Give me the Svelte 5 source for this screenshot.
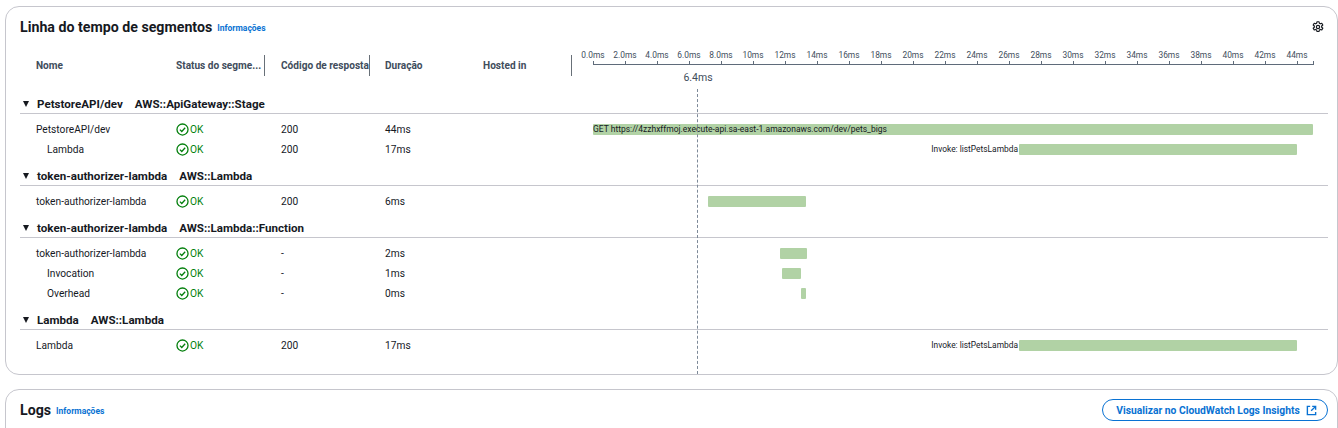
<script>
  const ticks = Array.from({ length: 23 }, (_, i) => i * 2);
  const tickLabel = (t) => (t < 10 ? t.toFixed(1) : String(t)) + 'ms';
  const pos = (x) => x - 593;
  const groups = [
    { name: 'PetstoreAPI/dev', type: 'AWS::ApiGateway::Stage', rows: [
      { name: 'PetstoreAPI/dev', code: '200', dur: '44ms', from: 593, to: 1313, inner: 'GET https://4zzhxffmoj.execute-api.sa-east-1.amazonaws.com/dev/pets_bigs' },
      { name: 'Lambda', sub: true, code: '200', dur: '17ms', from: 1019, to: 1297, outer: 'Invoke: listPetsLambda' }
    ]},
    { name: 'token-authorizer-lambda', type: 'AWS::Lambda', rows: [
      { name: 'token-authorizer-lambda', code: '200', dur: '6ms', from: 708, to: 806 }
    ]},
    { name: 'token-authorizer-lambda', type: 'AWS::Lambda::Function', rows: [
      { name: 'token-authorizer-lambda', code: '-', dur: '2ms', from: 780, to: 807 },
      { name: 'Invocation', sub: true, code: '-', dur: '1ms', from: 782, to: 801 },
      { name: 'Overhead', sub: true, code: '-', dur: '0ms', from: 801, to: 806 }
    ]},
    { name: 'Lambda', type: 'AWS::Lambda', rows: [
      { name: 'Lambda', code: '200', dur: '17ms', from: 1019, to: 1297, outer: 'Invoke: listPetsLambda' }
    ]}
  ];
</script>

<div class="page">
  <section class="card timeline">
    <header class="head">
      <h2>Linha do tempo de segmentos</h2>
      <a class="info" href="#info">Informações</a>
      <svg class="gear" viewBox="0 0 16 16" width="12" height="12" aria-hidden="true">
        <path d="M6.6 1h2.8l.4 2 1.3.7 1.9-.7 1.4 2.4-1.5 1.3v1.6l1.5 1.3-1.4 2.4-1.9-.7-1.3.7-.4 2H6.6l-.4-2-1.3-.7-1.9.7L1.6 9.6l1.5-1.3V6.7L1.6 5.4 3 3l1.9.7 1.3-.7z" fill="none" stroke="#16191f" stroke-width="1.6" stroke-linejoin="round"/>
        <circle cx="8" cy="8" r="2.2" fill="none" stroke="#16191f" stroke-width="1.6"/>
      </svg>
    </header>

    <div class="columns">
      <div class="th name">Nome</div>
      <div class="th status sep">Status do segme...</div>
      <div class="th code sep">Código de resposta</div>
      <div class="th dur">Duração</div>
      <div class="th hosted sep">Hosted in</div>
      <div class="ruler">
        <div class="axis"></div>
        {#each ticks as t}
          <div class="tick" style="left:{t * 16}px"><span>{tickLabel(t)}</span></div>
        {/each}
        <div class="tick last"></div>
      </div>
    </div>

    <div class="marker">6.4ms</div>

    {#each groups as g}
      <div class="group">
        <span class="caret"></span>
        <span class="gname">{g.name}</span>
        <span class="gtype">{g.type}</span>
      </div>
      <div class="rows">
        {#each g.rows as r}
          <div class="row">
            <div class="cell cname" class:sub={r.sub}>{r.name}</div>
            <div class="cell ok">
              <svg viewBox="0 0 16 16" width="13" height="13" aria-hidden="true">
                <circle cx="8" cy="8" r="6.8" fill="none" stroke="#037f0c" stroke-width="1.6"/>
                <path d="M4.8 8.2l2.3 2.3 4.2-4.6" fill="none" stroke="#037f0c" stroke-width="1.6"/>
              </svg>
              <span>OK</span>
            </div>
            <div class="cell">{r.code}</div>
            <div class="cell">{r.dur}</div>
            <div class="cell"></div>
            <div class="track">
              <div class="bar" style="left:{pos(r.from)}px;width:{r.to - r.from}px">
                {#if r.inner}<span class="inner">{r.inner}</span>{/if}
                {#if r.outer}<span class="outer">{r.outer}</span>{/if}
              </div>
            </div>
          </div>
        {/each}
      </div>
    {/each}

    <div class="dash"></div>
  </section>

  <section class="card logs">
    <header class="head">
      <h2>Logs</h2>
      <a class="info" href="#info">Informações</a>
      <button type="button">
        Visualizar no CloudWatch Logs Insights
        <svg viewBox="0 0 16 16" width="11" height="11" aria-hidden="true">
          <path d="M6 2H2v12h12v-4M9 2h5v5M14 2L7.5 8.5" fill="none" stroke="#0972d3" stroke-width="2"/>
        </svg>
      </button>
    </header>
    <p>Todos os logs do trace atual</p>
  </section>
</div>

<style>
  :global(body) { margin: 0; background: #fff; overflow: hidden; }
  .page {
    height: 428px;
    overflow: hidden;
    padding: 6px 0 0 5px;
    box-sizing: border-box;
    font-family: Roboto, "Liberation Sans", sans-serif;
    font-size: 10.2px;
    color: #16191f;
  }
  .card {
    position: relative;
    border: 1px solid #c6c6cd;
    border-radius: 14px;
    width: 1333px;
    box-sizing: border-box;
    padding: 0 9px 0 14px;
    background: #fff;
  }
  .timeline { height: 369px; }
  .logs { margin-top: 14px; height: 60px; }
  .head { display: flex; align-items: center; height: 40px; gap: 5px; }
  .head h2 { margin: 0; font-size: 14.2px; font-weight: 700; line-height: 20px; }
  .info { color: #0972d3; font-size: 8.5px; font-weight: 700; text-decoration: none; margin-top: 2px; }
  .gear { margin-left: auto; margin-right: 4px; }
  .columns { display: flex; height: 24px; margin-top: 8px; margin-bottom: 16px; font-weight: 700; color: #414d5c; font-size: 10.1px; }
  .th { display: flex; align-items: center; box-sizing: border-box; white-space: nowrap; height: 21px; }
  .th.sep { border-right: 1px solid #687078; }
  .name { width: 156px; padding-left: 16px; }
  .status { width: 89px; margin-right: 16px; }
  .code { width: 89px; margin-right: 15px; }
  .dur { width: 98px; }
  .hosted { width: 89px; }
  .ruler { position: relative; margin-left: 21px; margin-top: -1px; width: 720px; height: 24px; font-weight: 400; }
  .axis { position: absolute; left: 0; right: 0; top: 10px; height: 1px; background: #5f6b7a; }
  .tick { position: absolute; top: 7px; width: 1px; height: 4px; background: #5f6b7a; }
  .tick.last { left: 720px; }
  .tick span { position: absolute; bottom: 5px; left: 0; transform: translateX(-50%); font-size: 8.4px; line-height: 10px; white-space: nowrap; color: #414d5c; }
  .marker { position: absolute; left: 672px; top: 64px; width: 40px; text-align: center; font-size: 10.5px; line-height: 14px; color: #414d5c; }
  .dash { position: absolute; left: 691px; top: 82px; bottom: 0; border-left: 1px dashed #7d8998; }
  .group {
    display: flex; align-items: center;
    margin-top: 8px;
    height: 18px;
    padding-left: 3px;
    font-weight: 700; font-size: 11.6px;
    border-bottom: 1px solid #c6c6cd;
    box-sizing: content-box;
  }
  .caret { width: 0; height: 0; border-left: 3.5px solid transparent; border-right: 3.5px solid transparent; border-top: 6px solid #16191f; margin-right: 8px; }
  .gtype { margin-left: 12px; }
  .rows { padding-top: 5px; }
  .row { display: flex; height: 20px; align-items: center; }
  .cell { width: 104px; white-space: nowrap; }
  .row .cell:nth-child(3) { width: 104px; }
  .row .cell:nth-child(4) { width: 98px; }
  .row .cell:nth-child(5) { width: 90px; }
  .cname { width: 156px; box-sizing: border-box; padding-left: 16px; }
  .cname.sub { padding-left: 27px; }
  .ok { display: flex; align-items: center; gap: 1px; width: 105px; color: #037f0c; }
  .track { position: relative; margin-left: 20px; width: 720px; height: 11px; }
  .bar { position: absolute; top: 0; height: 11px; background: #b1d2a5; border-radius: 1px; }
  .inner { position: absolute; left: 0; top: 0; font-size: 8.5px; line-height: 11px; white-space: nowrap; }
  .outer { position: absolute; right: 100%; margin-right: 1px; top: 0; font-size: 8.4px; line-height: 11px; white-space: nowrap; }
  button {
    margin-left: auto;
    display: flex; align-items: center; gap: 6px;
    height: 22px; width: 226px; box-sizing: border-box;
    justify-content: center;
    border: 1px solid #0972d3; border-radius: 11px;
    background: #fff; color: #0972d3;
    font: 700 10.3px Roboto, sans-serif;
    padding: 0 0 0 3px;
  }
  .logs p { margin: -3px 0 0; font-size: 10.2px; line-height: 14px; }
</style>
